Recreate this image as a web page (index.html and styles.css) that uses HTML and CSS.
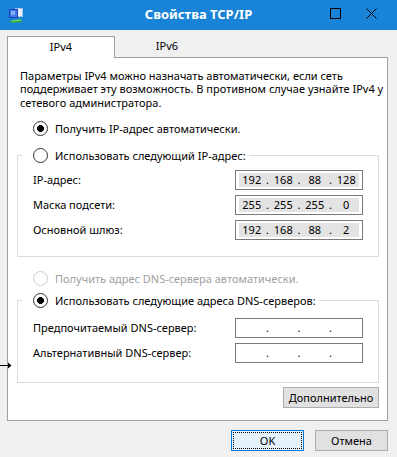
FILE: index.html
```html
<!DOCTYPE html>
<html lang="ru">
<head>
  <meta charset="UTF-8" />
  <title>Свойства TCP/IP</title>
  <link rel="stylesheet" href="styles.css">
</head>
<body>
  <div class="window">
    <div class="titlebar">
      <div class="title-left">
        <svg class="app-icon" width="20" height="17" viewBox="0 0 20 17">
          <rect x="9" y="1" width="8" height="9" fill="#9fc3ee"/>
          <rect x="10" y="2" width="6" height="7" fill="#e8f1fc"/>
          <rect x="3" y="2" width="9" height="9" fill="#1c3fb8"/>
          <rect x="4" y="3" width="7" height="7" fill="#3f7ae6"/>
          <rect x="5" y="4" width="4" height="4" fill="#7fb0f5"/>
          <path d="M3 14 L14 12 L17 15 L6 16 Z" fill="#2ca84a"/>
          <path d="M6 14 L15 13" stroke="#8ee07a" stroke-width="1"/>
        </svg>
      </div>
      <div class="title">Свойства TCP/IP</div>
      <div class="controls">
        <span class="max-btn"></span>
        <svg class="close-btn" width="11" height="11" viewBox="0 0 11 11">
          <path d="M0.5 0.5 L10.5 10.5 M10.5 0.5 L0.5 10.5" stroke="#000" stroke-width="1"/>
        </svg>
      </div>
    </div>

    <div class="body">
      <div class="tabs">
        <div class="tab active">IPv4</div>
        <div class="tab">IPv6</div>
      </div>

      <div class="panel">
        <p class="intro">Параметры IPv4 можно назначать автоматически, если сеть<br>поддерживает эту возможность. В противном случае узнайте IPv4 у<br>сетевого администратора.</p>

        <div class="radio checked first">Получить IP-адрес автоматически.</div>

        <fieldset class="group ip-group">
          <legend><span class="radio">Использовать следующий IP-адрес:</span></legend>
          <div class="field-row">
            <span>IP-адрес:</span>
            <div class="ip filled"><span>192</span><i>.</i><span>168</span><i>.</i><span>88</span><i>.</i><span>128</span></div>
          </div>
          <div class="field-row">
            <span>Маска подсети:</span>
            <div class="ip filled"><span>255</span><i>.</i><span>255</span><i>.</i><span>255</span><i>.</i><span>0</span></div>
          </div>
          <div class="field-row">
            <span>Основной шлюз:</span>
            <div class="ip filled"><span>192</span><i>.</i><span>168</span><i>.</i><span>88</span><i>.</i><span>2</span></div>
          </div>
        </fieldset>

        <div class="radio disabled dns-auto">Получить адрес DNS-сервера автоматически.</div>

        <fieldset class="group dns-group">
          <legend><span class="radio checked">Использовать следующие адреса DNS-серверов:</span></legend>
          <div class="field-row">
            <span>Предпочитаемый DNS-сервер:</span>
            <div class="ip"><span></span><i>.</i><span></span><i>.</i><span></span><i>.</i><span></span></div>
          </div>
          <div class="field-row">
            <span>Альтернативный DNS-сервер:</span>
            <div class="ip"><span></span><i>.</i><span></span><i>.</i><span></span><i>.</i><span></span></div>
          </div>
        </fieldset>

        <div class="advanced-row">
          <button class="btn">Дополнительно</button>
        </div>
      </div>

      <div class="footer">
        <button class="btn primary"><span class="focus">OK</span></button>
        <button class="btn">Отмена</button>
      </div>
    </div>

    <svg class="cursor" width="12" height="7" viewBox="0 0 12 7">
      <path d="M0 3.5 H9" stroke="#000" stroke-width="1"/>
      <path d="M8 0.5 L11.5 3.5 L8 6.5 Z" fill="#000"/>
    </svg>
  </div>
</body>
</html>
```

FILE: styles.css
```css
* {
  box-sizing: border-box;
}

body {
  margin: 0;
  font-family: 'Noto Sans', 'Segoe UI', sans-serif;
  font-size: 11px;
  color: #000;
  background: #f0f0f0;
}

.window {
  position: relative;
  width: 397px;
  height: 457px;
  background: #f0f0f0;
  overflow: hidden;
}

/* заголовок окна */
.titlebar {
  height: 30px;
  background: #1883d7;
  display: grid;
  grid-template-columns: 1fr auto 1fr;
  align-items: center;
}

.title-left {
  padding-left: 6px;
  display: flex;
  align-items: center;
}

.title {
  color: #fff;
  font-weight: bold;
  font-size: 13px;
  padding-bottom: 3px;
}

.controls {
  display: flex;
  justify-content: flex-end;
  align-items: center;
  gap: 25px;
  padding-right: 20px;
  padding-bottom: 4px;
}

.max-btn {
  width: 11px;
  height: 11px;
  border: 1px solid #000;
}

/* вкладки */
.body {
  padding: 6px 9px 0 7px;
}

.tabs {
  display: flex;
  height: 21px;
}

.tab {
  width: 104px;
  text-align: center;
  line-height: 20px;
}

.tab.active {
  width: 108px;
  height: 22px;
  background: #fff;
  border: 1px solid #a0a0a0;
  border-bottom: none;
  position: relative;
  z-index: 1;
}

.panel {
  height: 364px;
  background: #fff;
  border: 1px solid #a0a0a0;
  padding: 11px 8px 0 9px;
}

.intro {
  margin: 0 0 0 3px;
  line-height: 13.4px;
  white-space: nowrap;
}

/* радиокнопки */
.radio {
  display: flex;
  align-items: center;
  height: 16px;
  padding-left: 16px;
  white-space: nowrap;
}

.radio::before {
  content: "";
  width: 13px;
  height: 13px;
  margin-right: 7px;
  border: 1px solid #333;
  border-radius: 50%;
  background: #fff;
  flex: none;
}

.radio.checked::before {
  background: radial-gradient(circle, #000 0 3.2px, #fff 3.7px);
}

.radio.disabled {
  color: #a0a0a0;
}

.radio.disabled::before {
  border-color: #cccccc;
}

legend .radio {
  padding-left: 0;
}

.first {
  margin-top: 11px;
}

/* групповые рамки */
.group {
  margin: 0;
  min-inline-size: 0;
  border: 1px solid #dcdcdc;
  padding: 0 15px 0 4px;
}

.group legend {
  padding: 0 3px 0 11px;
}

.ip-group {
  margin-top: 11px;
  padding-bottom: 16px;
}

.ip-group .field-row:first-of-type {
  margin-top: 7px;
}

.dns-auto {
  margin-top: 13px;
}

.dns-group {
  margin-top: 6px;
  padding-bottom: 19px;
}

.dns-group .field-row:first-of-type {
  margin-top: 10px;
}

.field-row {
  display: flex;
  justify-content: space-between;
  align-items: center;
  margin-top: 5px;
  padding-left: 11px;
}

.field-row > span {
  line-height: 18px;
}

.ip {
  width: 128px;
  height: 20px;
  border: 1px solid #7a7a7a;
  padding: 2px 3px;
  display: flex;
  background: #fff;
}

.ip span {
  flex: 1;
  text-align: center;
  line-height: 14px;
}

.ip i {
  font-style: normal;
  width: 6px;
  line-height: 14px;
  text-align: center;
}

.ip.filled span,
.ip.filled i {
  background: #e3e3e3;
}

/* кнопки */
.advanced-row {
  display: flex;
  justify-content: flex-end;
  margin-top: 4px;
}

.btn {
  font-family: inherit;
  font-size: 11px;
  color: #000;
  height: 21px;
  padding: 0;
  background: #e1e1e1;
  border: 1px solid #adadad;
}

.advanced-row .btn {
  width: 96px;
}

.footer {
  display: flex;
  justify-content: flex-end;
  gap: 11px;
  margin-top: 9px;
}

.footer .btn {
  width: 73px;
}

.btn.primary {
  background: #e5f1fb;
  border-color: #0078d7;
  padding: 1px;
}

.focus {
  display: block;
  height: 100%;
  line-height: 15px;
  border: 1px dotted #000;
}

.cursor {
  position: absolute;
  left: 0;
  top: 362px;
}
```
